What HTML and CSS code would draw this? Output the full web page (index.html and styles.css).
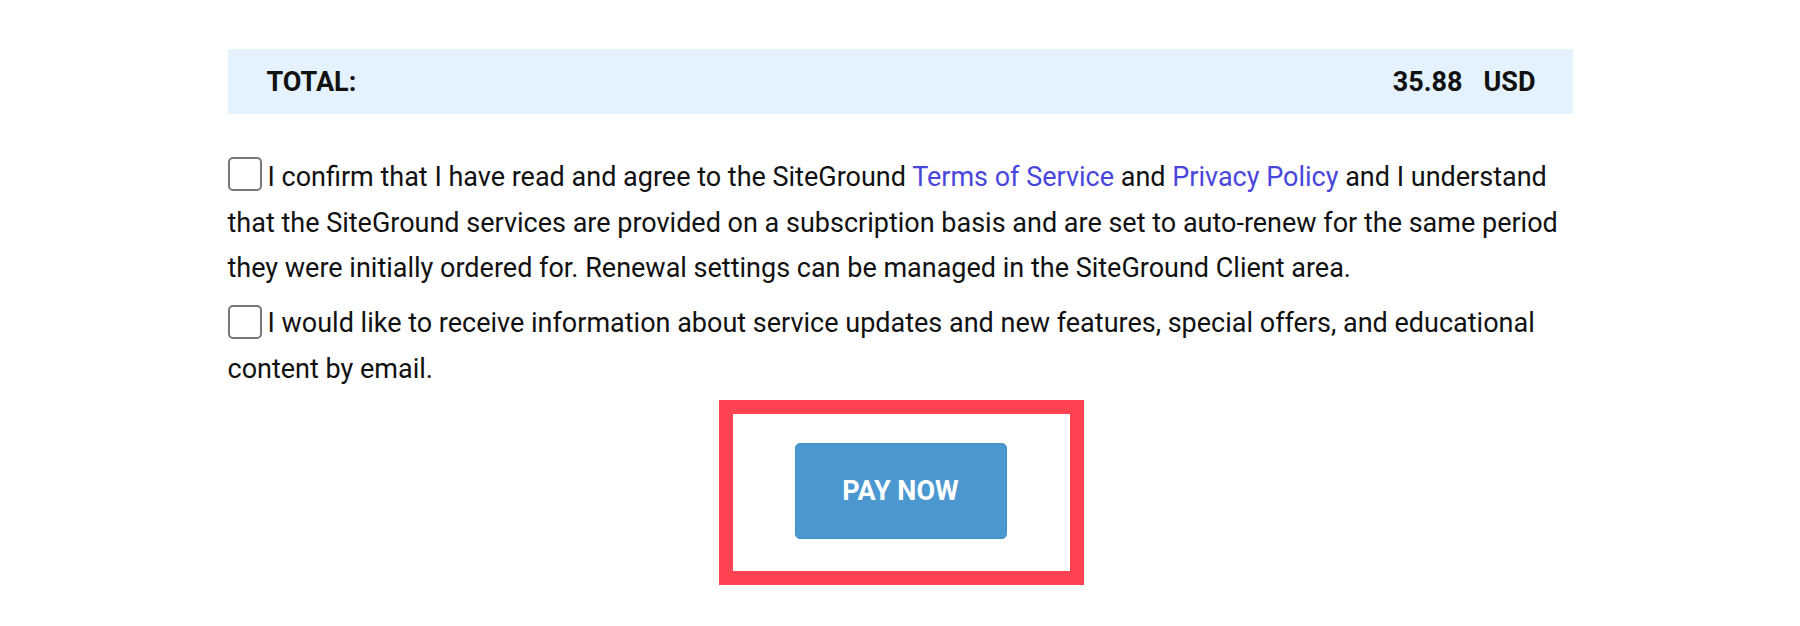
FILE: index.html
```
<!DOCTYPE html>
<html lang="en">
<head>
    <meta charset="UTF-8">
    <meta name="viewport" content="width=device-width, initial-scale=1.0">
    <title>Checkout</title>
    <link rel="stylesheet" href="styles.css">
</head>
<body>

    <div class="checkout">
        <!-- Order total -->
        <div class="total-bar">
            <span class="total-label">TOTAL:</span>
            <span class="total-amount"><span>35.88</span><span>USD</span></span>
        </div>

        <!-- Agreements -->
        <p class="agree"><span class="box"></span>I confirm that I have read and agree to the SiteGround <a href="#">Terms of Service</a> and <a href="#">Privacy Policy</a> and I understand that the SiteGround services are provided on a subscription basis and are set to auto-renew for the same period they were initially ordered for. Renewal settings can be managed in the SiteGround Client area.</p>
        <p class="agree"><span class="box"></span>I would like to receive information about service updates and new features, special offers, and educational content by email.</p>

        <!-- Pay button -->
        <div class="pay-wrap">
            <div class="highlight">
                <button class="pay-btn">PAY NOW</button>
            </div>
        </div>
    </div>

</body>
</html>
```
FILE: styles.css
```
body {
    font-family: Roboto, "Liberation Sans", sans-serif;
    background-color: #fff;
    color: #111;
    margin: 0;
    padding: 0;
}

.checkout {
    width: 1345px;
    margin: 49px auto 0;
}

.total-bar {
    display: flex;
    justify-content: space-between;
    align-items: center;
    height: 65px;
    padding: 0 37px 0 39px;
    background-color: #e3f2fd;
    font-size: 27px;
    font-weight: 700;
}

.total-amount {
    display: flex;
    gap: 21px;
}

.agree {
    font-size: 27px;
    line-height: 45.5px;
    margin: 0;
}

.agree:first-of-type {
    margin-top: 41px;
}

.agree + .agree {
    margin-top: 9.5px;
}

.box {
    display: inline-block;
    width: 30px;
    height: 30px;
    margin: 2px 6px 0 0;
    vertical-align: top;
    border: 2px solid #777;
    border-radius: 5px;
}

.agree + .agree .box {
    margin-top: 4px;
}

a {
    color: #4a46dc;
    text-decoration: none;
}

.pay-wrap {
    display: flex;
    justify-content: center;
    margin-top: 8px;
    padding-left: 2px;
}

.highlight {
    border: 14px solid #ff4353;
    padding: 29px 63px 32px 62px;
}

.pay-btn {
    display: block;
    width: 212px;
    height: 96px;
    border: 1px solid #4390c8;
    border-radius: 5px;
    background-color: #4b98d1;
    color: #fff;
    font-family: Roboto, "Liberation Sans", sans-serif;
    font-size: 27px;
    font-weight: 700;
    cursor: pointer;
}
```
